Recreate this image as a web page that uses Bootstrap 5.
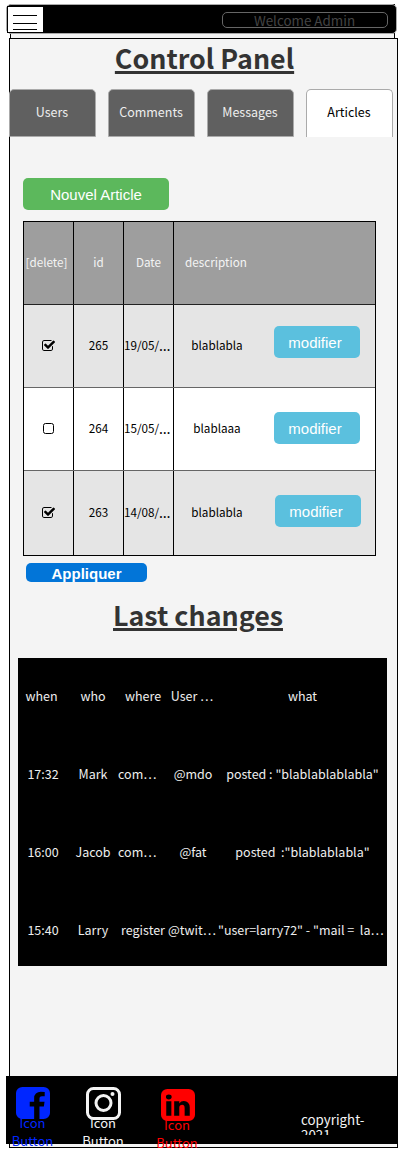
<!DOCTYPE html>
<html lang="en">
<head>
<meta charset="utf-8">
<meta name="viewport" content="width=device-width, initial-scale=1">
<title>Control Panel</title>
<link href="https://cdn.jsdelivr.net/npm/bootstrap@5.3.0/dist/css/bootstrap.min.css" rel="stylesheet">
<style>
body{font-family:"Noto Sans CJK KR",sans-serif;font-size:12.5px;line-height:18px;color:#000;background:#fff;height:1152px;overflow:hidden}
.shell{width:385px;height:34px;margin:0 0 0 10px;border:1px solid #000;border-bottom:0;background:#f4f4f4}
.topbar{width:391px;height:30px;margin:-1px 0 0 -5px;background:#000;border:1px solid #aaa;border-radius:5px}
.menu-btn{width:37px;height:27px;background:#fff;border:1px solid #000}
.welcome{width:166px;height:16px;margin:1px 8px 0 0;padding-right:1px;border:1px solid #666;border-radius:5px;color:#444;font-size:13.4px;line-height:15px}
.page-frame{width:389px;height:1110px;margin-left:9px;background:#f4f4f4;border:1px solid #000}
.heading{font-size:26.8px;font-weight:700;color:#333;line-height:38px;text-decoration:underline;text-decoration-thickness:3px;text-underline-offset:2px}
.h-main{height:50px;padding-left:2px}
.h-changes{height:76px;padding-top:14px;padding-right:11px}
.tabs{gap:12px;margin-left:-1px}
.tabs .nav-link{width:87px;height:48px;padding:0 1px 0 0;line-height:44px;text-align:center;color:#eee;background:#606060;border:1px solid #aaa;border-radius:5px 5px 0 0;margin:0}
.tabs .nav-link.active{background:#fff;color:#000;border-bottom:0}
.btn-flat{border:0;border-radius:5px;padding:0;font-family:"Liberation Sans",sans-serif;color:#fff;font-size:15px}
.btn-new{width:146px;height:32px;line-height:33px;margin:41px 0 0 13px;background:#5cb85c}
.btn-edit{width:86px;height:32px;line-height:33px;padding-right:4px;margin-left:14px;background:#5bc0de}
.btn-apply{width:121px;height:19px;line-height:22px;margin:7px 0 0 16px;background:#0275d8;font-weight:700;overflow:hidden}
.articles{width:353px;height:335px;margin:11px 0 0 13px;border:1px solid #000;font-size:11.7px}
.art-row{display:grid;grid-template-columns:50px 50px 50px 201px;height:83px;border-bottom:1px solid #666;background:#fff}
.art-row:first-child{background:#9e9e9e;color:#f4f4f4;border-color:#222}
.art-row.shade{background:#e5e5e5}
.art-row:last-child{height:84px;border-bottom:0}
.art-row>div{display:flex;align-items:center;justify-content:center;border-right:1px solid #000;white-space:nowrap;padding-bottom:2px}
.art-row>div:first-child svg{margin-bottom:-1px}
.art-row>div:last-child{border-right:0;justify-content:flex-start}
.art-row>.date-cell{justify-content:flex-start}
.dots{font-family:"Noto Sans",sans-serif;font-size:14.5px;line-height:1}
.desc{width:86px;text-align:center}
.changes{width:369px;height:308px;margin-left:8px;background:#000;color:#eee}
.chg-row{display:grid;grid-template-columns:50px 50px 50px 50px 169px;height:77.8px;align-items:center;text-align:center;padding-bottom:1px}
.chg-row>div{white-space:pre}
.foot{width:392px;height:68px;margin:110px 0 0 -4px;background:#000}
.social{width:50px;font-size:13px;text-align:center}
.social svg{display:block;margin:0 auto}
.social span{display:block;line-height:18px;margin-top:-5px}
.copy{width:80px;height:23px;margin:36px 0 0;font-size:13.33px;line-height:15px;color:#f4f4f4;overflow:hidden}
</style>
</head>
<body>
<svg width="0" height="0" class="d-none">
<symbol id="checked" viewBox="0 128 1664 1408" preserveAspectRatio="none"><path d="M1408 930v318q0 119-84.5 203.5t-203.5 84.5h-832q-119 0-203.5-84.5t-84.5-203.5v-832q0-119 84.5-203.5t203.5-84.5h832q63 0 117 25 15 7 18 23 3 17-9 29l-49 49q-10 10-23 10-3 0-9-2-23-6-45-6h-832q-66 0-113 47t-47 113v832q0 66 47 113t113 47h832q66 0 113-47t47-113v-254q0-13 9-22l64-64q10-10 23-10 6 0 12 3 20 8 20 29zM1639 441l-814 814q-24 24-57 24t-57-24l-430-430q-24-24-24-57t24-57l110-110q24-24 57-24t57 24l263 263 647-647q24-24 57-24t57 24l110 110q24 24 24 57t-24 57z"/></symbol>
</svg>
<div style="height:4px"></div>
<header class="shell">
  <div class="topbar d-flex align-items-center justify-content-between">
    <div class="menu-btn"><svg width="35" height="25" class="d-block" stroke="#000"><path d="M5 8.500h24M5 16.500h24M5 22.500h24"/></svg></div>
    <div class="welcome text-center">Welcome Admin</div>
  </div>
</header>
<main class="page-frame">
  <div class="h-main text-center"><h1 class="heading m-0">Control Panel</h1></div>
  <nav class="nav flex-nowrap tabs">
    <a class="nav-link">Users</a><a class="nav-link">Comments</a><a class="nav-link">Messages</a><a class="nav-link active">Articles</a>
  </nav>
  <button class="btn btn-flat btn-new d-block">Nouvel Article</button>
  <section class="articles">
    <div class="art-row"><div class="pe-1">[delete]</div><div>id</div><div>Date</div><div><span class="desc" style="padding-right:2px">description</span></div></div>
    <div class="art-row shade"><div><svg width="13" height="11"><use href="#checked"/></svg></div><div>265</div><div class="date-cell">19/05/<span class="dots">…</span></div><div><span class="desc">blablabla</span><button class="btn btn-flat btn-edit" style="margin-bottom:7px">modifier</button></div></div>
    <div class="art-row"><div><svg width="11" height="11" fill="none" stroke="#000"><rect x=".5" y=".5" width="10" height="10" rx="2"/></svg></div><div>264</div><div class="date-cell">15/05/<span class="dots">…</span></div><div><span class="desc">blablaaa</span><button class="btn btn-flat btn-edit">modifier</button></div></div>
    <div class="art-row shade"><div><svg width="13" height="11"><use href="#checked"/></svg></div><div>263</div><div class="date-cell">14/08/<span class="dots">…</span></div><div><span class="desc">blablabla</span><button class="btn btn-flat btn-edit" style="margin-left:15px;margin-bottom:3px">modifier</button></div></div>
  </section>
  <button class="btn btn-flat btn-apply d-block">Appliquer</button>
  <div class="h-changes text-center"><h2 class="heading m-0">Last changes</h2></div>
  <section class="changes">
    <div class="chg-row"><div style="padding-right:3px">when</div><div>who</div><div>where</div><div style="padding-right:2px">User …</div><div>what</div></div>
    <div class="chg-row"><div>17:32</div><div>Mark</div><div class="text-start">com…</div><div>@mdo</div><div>posted : "blablablablabla"</div></div>
    <div class="chg-row"><div>16:00</div><div>Jacob</div><div class="text-start">com…</div><div>@fat</div><div>posted  :"blablablabla"</div></div>
    <div class="chg-row"><div>15:40</div><div>Larry</div><div>register</div><div class="text-start">@twit…</div><div class="text-start">"user=larry72" - "mail =  la…</div></div>
  </section>
  <footer class="foot d-flex">
    <div class="social" style="color:#0026ff;margin-left:2px;padding-top:11px"><svg width="34" height="32" viewBox="0 128 1536 1536" preserveAspectRatio="none" fill="currentColor"><path d="M1248 128q119 0 203.500 84.500t84.500 203.500v960q0 119-84.500 203.500t-203.500 84.500h-188v-595h199l30-232h-229v-148q0-56 23.500-84t91.500-28l122-1v-207q-63-9-178-9-136 0-217.500 80t-81.500 226v171h-200v232h200v595h-532q-119 0-203.500-84.500t-84.500-203.500v-960q0-119 84.500-203.500t203.500-84.500h960z"/></svg><span style="margin-left:-1px">Icon<br>Button</span></div>
    <div class="social" style="color:#f4f4f4;margin-left:20px;padding-top:11px;overflow:hidden"><svg width="35" height="33" fill="none" stroke="currentColor" stroke-width="3"><rect x="1.500" y="1.500" width="32" height="30" rx="6"/><ellipse cx="17.500" cy="16" rx="7.500" ry="7.500"/><circle cx="26.500" cy="7" r="2" fill="currentColor" stroke="none"/></svg><span style="margin-top:-6px">Icon<br>Button</span></div>
    <div class="social" style="color:#f00;margin-left:25px;padding-top:13px"><svg width="34" height="32" viewBox="0 128 1536 1536" preserveAspectRatio="none" fill="currentColor"><path d="M237 1414h231v-694h-231v694zM483 506q-1-52-36-86t-93-34-94.500 34-36.500 86q0 51 35.500 85.500t92.500 34.500h1q59 0 95-34.500t36-85.500zM1068 1414h231v-398q0-154-73-233t-193-79q-136 0-209 117h2v-101h-231q3 66 0 694h231v-388q0-38 7-56 15-35 45-59.500t74-24.500q116 0 116 157v371zM1536 416v960q0 119-84.500 203.500t-203.500 84.500h-960q-119 0-203.500-84.500t-84.500-203.500v-960q0-119 84.500-203.500t203.500-84.500h960q119 0 203.500 84.500t84.500 203.500z"/></svg><span style="margin-left:-2px">Icon<br>Button</span></div>
    <div class="copy" style="margin-left:98px">copyright-<br>2021</div>
  </footer>
</main>
</body>
</html>
